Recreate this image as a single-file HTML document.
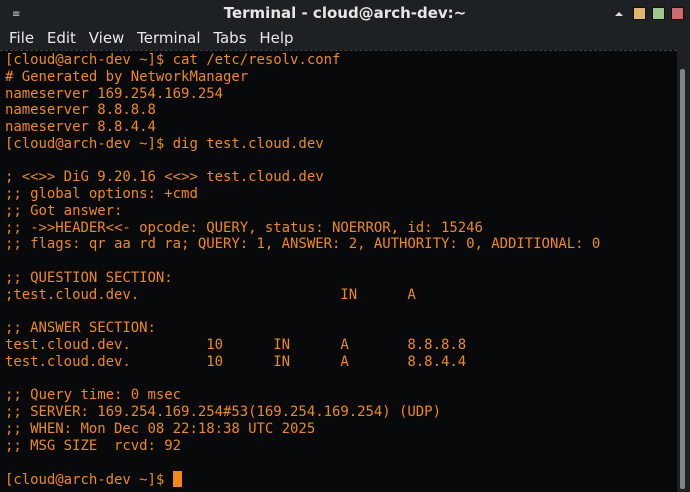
<!DOCTYPE html>
<html><head><style>
body{margin:0;width:690px;height:492px;overflow:hidden;background:#1e2124;font-family:"DejaVu Sans",sans-serif;}
.title{position:absolute;left:0;top:0;width:690px;height:26px;background:#1e2124;color:#e6e6e6;font-weight:bold;font-size:15px;text-align:center;line-height:26px;}
.menu{position:absolute;left:0;top:26px;height:24px;width:690px;color:#e8e8e8;font-size:15px;line-height:24px;}
.menu span{margin-left:9px;margin-right:-1px}
.term{position:absolute;left:0;top:50px;width:677px;height:442px;background:#07090b;border-top:1px dashed #3a3f44;box-sizing:border-box;}
pre{margin:0;position:absolute;left:5px;top:1px;font-family:"DejaVu Sans Mono",monospace;font-size:14px;letter-spacing:-0.045px;line-height:16.77px;color:#f08a12;}
.sb{position:absolute;left:680px;top:69px;width:5px;height:420px;background:#7d858b;border-radius:2px;}
.btn{position:absolute;top:7px;width:11px;height:11px;border:1px solid #111;}
.cur{display:inline-block;width:9px;height:16px;background:#f08a12;vertical-align:-3px;}
</style></head><body>
<div class="title">Terminal - cloud@arch-dev:~</div>
<div style="position:absolute;left:12px;top:9px;color:#ddd;font-size:10px">&#8801;</div>
<div style="position:absolute;left:615px;top:12px;width:0;height:0;border-left:4px solid transparent;border-right:4px solid transparent;border-bottom:4px solid #ddd"></div>
<div class="btn" style="left:633px;background:#e0b86a"></div>
<div class="btn" style="left:652px;background:#a0c78a"></div>
<div class="btn" style="left:671px;background:#cf6a6a"></div>
<div class="menu"><span>File</span> <span>Edit</span> <span>View</span> <span>Terminal</span> <span>Tabs</span> <span>Help</span></div>
<div class="term"><pre>[cloud@arch-dev ~]$ cat /etc/resolv.conf
# Generated by NetworkManager
nameserver 169.254.169.254
nameserver 8.8.8.8
nameserver 8.8.4.4
[cloud@arch-dev ~]$ dig test.cloud.dev

; &lt;&lt;&gt;&gt; DiG 9.20.16 &lt;&lt;&gt;&gt; test.cloud.dev
;; global options: +cmd
;; Got answer:
;; -&gt;&gt;HEADER&lt;&lt;- opcode: QUERY, status: NOERROR, id: 15246
;; flags: qr aa rd ra; QUERY: 1, ANSWER: 2, AUTHORITY: 0, ADDITIONAL: 0

;; QUESTION SECTION:
;test.cloud.dev.                        IN      A

;; ANSWER SECTION:
test.cloud.dev.         10      IN      A       8.8.8.8
test.cloud.dev.         10      IN      A       8.8.4.4

;; Query time: 0 msec
;; SERVER: 169.254.169.254#53(169.254.169.254) (UDP)
;; WHEN: Mon Dec 08 22:18:38 UTC 2025
;; MSG SIZE  rcvd: 92

[cloud@arch-dev ~]$ <span class="cur"></span></pre></div>
<div class="sb"></div>
</body></html>
